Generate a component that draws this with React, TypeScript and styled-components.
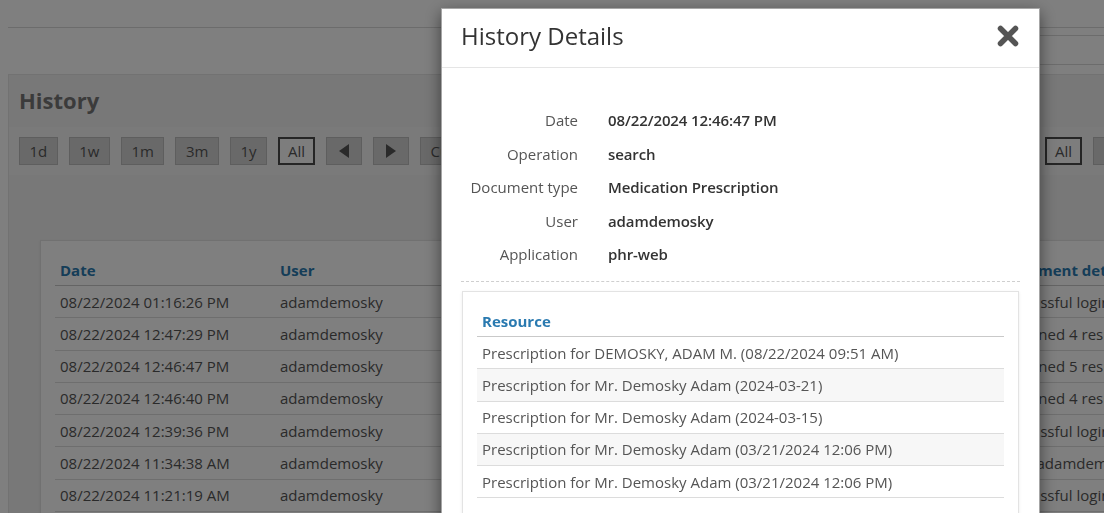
import React from "react";
import styled, { createGlobalStyle } from "styled-components";

const Global = createGlobalStyle`
  html, body { margin: 0; padding: 0; background: #fff; overflow: hidden; }
  body { font-family: "Open Sans", "Noto Sans", Arial, sans-serif; color: #555; }
  * { box-sizing: border-box; }
`;

const Page = styled.div`
  width: 1104px;
  height: 513px;
  overflow: hidden;
  padding-left: 8px;
  background: #fff;
`;

const TopBar = styled.div`
  height: 28px;
  width: 1200px;
  border-bottom: 1px solid #d9d9d9;
`;

const SubBar = styled.div`
  display: flex;
  justify-content: flex-end;
  width: 1200px;
  margin-top: 7px;
`;

const SearchStrip = styled.div`
  width: 300px;
  height: 30px;
  border-top: 1px solid #d9d9d9;
  border-bottom: 1px solid #d9d9d9;
`;

const Panel = styled.section`
  width: 1132px;
  margin-top: 9px;
  background: #f1f1f1;
  border: 1px solid #e4e4e4;
  height: 600px;
`;

const PanelTitle = styled.h2`
  margin: 0;
  padding: 12px 10px 14px;
  font-size: 22px;
  line-height: 26px;
  font-weight: 700;
  color: #777;
`;

const Toolbar = styled.div`
  display: flex;
  align-items: center;
  gap: 11px;
  padding: 10px;
  background: #f5f5f5;
`;

const Group = styled.div<{ $right?: boolean }>`
  display: flex;
  gap: 11px;
  margin-left: ${(p) => (p.$right ? "auto" : "0")};
`;

const RangeButton = styled.button<{ $active?: boolean }>`
  height: 28px;
  padding: 0 ${(p) => (p.$active ? "8px" : "9.5px")};
  display: flex;
  align-items: center;
  justify-content: center;
  font-family: inherit;
  font-size: 15px;
  color: #555;
  background: ${(p) => (p.$active ? "#fafafa" : "#d3d3d3")};
  border: ${(p) => (p.$active ? "2px solid #4a4a4a" : "1px solid #bdbdbd")};
  border-radius: 0;
`;

const ArrowButton = styled(RangeButton)`
  padding: 0 12px;
`;

const Content = styled.div`
  padding: 65px 0 0 31px;
`;

const Card = styled.div<{ $inset?: boolean }>`
  background: #fff;
  border: 1px solid #e3e3e3;
  box-shadow: 0 1px 3px rgba(0, 0, 0, 0.08);
  padding: 14px;
  width: ${(p) => (p.$inset ? "auto" : "1095px")};
  margin: ${(p) => (p.$inset ? "9px 1px 0" : "0")};
  height: ${(p) => (p.$inset ? "260px" : "auto")};
`;

const Table = styled.table`
  width: 100%;
  border-collapse: collapse;
  table-layout: fixed;
  font-size: 15px;
`;

const Th = styled.th<{ $w?: number }>`
  text-align: left;
  font-weight: 700;
  color: #2a7ab0;
  padding: 5px;
  line-height: 20px;
  border-bottom: 1px solid #c9c9c9;
  width: ${(p) => (p.$w ? `${p.$w}px` : "auto")};
  white-space: nowrap;
  overflow: hidden;
`;

const Tr = styled.tr<{ $striped?: boolean }>`
  background: ${(p) => (p.$striped ? "#f7f7f7" : "transparent")};
`;

const Td = styled.td`
  padding: 5.5px 5px;
  line-height: 20.3px;
  color: #555;
  border-bottom: 1px solid #dcdcdc;
  white-space: nowrap;
  overflow: hidden;
`;

const Overlay = styled.div`
  position: fixed;
  inset: 0;
  background: rgba(0, 0, 0, 0.5);
`;

const Modal = styled.div`
  position: fixed;
  left: 441px;
  top: 8px;
  width: 599px;
  height: 560px;
  background: #fff;
  border: 1px solid rgba(0, 0, 0, 0.35);
  box-shadow: 0 5px 15px rgba(0, 0, 0, 0.5);
`;

const ModalHeader = styled.div`
  display: flex;
  align-items: center;
  justify-content: space-between;
  padding: 10px 20px 15px 19px;
  border-bottom: 1px solid #e5e5e5;
`;

const ModalTitle = styled.h4`
  margin: 0;
  font-size: 24px;
  line-height: 33px;
  font-weight: 400;
  color: #333;
`;

const CloseButton = styled.button`
  border: 0;
  background: none;
  padding: 0;
  width: 22px;
  height: 22px;
  display: flex;
`;

const ModalBody = styled.div`
  padding: 42px 19px 0;
`;

const Details = styled.dl`
  margin: 0;
  display: grid;
  grid-template-columns: 117px 1fr;
  column-gap: 30px;
  row-gap: 13.5px;
  font-size: 15px;
  line-height: 20px;
`;

const Dt = styled.dt`
  text-align: right;
  color: #555;
  white-space: nowrap;
`;

const Dd = styled.dd`
  margin: 0;
  font-weight: 600;
  color: #333;
  letter-spacing: -0.1px;
`;

const Divider = styled.div`
  margin-top: 17px;
  border-top: 1px dashed #cfcfcf;
`;

const Triangle = ({ dir }: { dir: "left" | "right" }) => (
  <svg width="10" height="14" viewBox="0 0 10 14">
    <path d={dir === "left" ? "M10 0 L0 7 L10 14 Z" : "M0 0 L10 7 L0 14 Z"} fill="#555" />
  </svg>
);

const CloseIcon = () => (
  <svg width="22" height="22" viewBox="0 0 22 22">
    <path d="M3.5 3.5 L18.5 18.5 M18.5 3.5 L3.5 18.5" stroke="#555" strokeWidth="5.5" strokeLinecap="round" />
  </svg>
);

const historyRows = [
  ["08/22/2024 01:16:26 PM", "phr-web", "login", "", "Successful login"],
  ["08/22/2024 12:47:29 PM", "phr-web", "search", "Medication Prescription", "Returned 4 results"],
  ["08/22/2024 12:46:47 PM", "phr-web", "search", "Medication Prescription", "Returned 5 results"],
  ["08/22/2024 12:46:40 PM", "phr-web", "search", "Medication Prescription", "Returned 4 results"],
  ["08/22/2024 12:39:36 PM", "phr-web", "login", "", "Successful login"],
  ["08/22/2024 11:34:38 AM", "phr-web", "logout", "", "User adamdemosky logged out"],
  ["08/22/2024 11:21:19 AM", "phr-web", "login", "", "Successful login"],
];

const resources = [
  "Prescription for DEMOSKY, ADAM M. (08/22/2024 09:51 AM)",
  "Prescription for Mr. Demosky Adam (2024-03-21)",
  "Prescription for Mr. Demosky Adam (2024-03-15)",
  "Prescription for Mr. Demosky Adam (03/21/2024 12:06 PM)",
  "Prescription for Mr. Demosky Adam (03/21/2024 12:06 PM)",
];

const details: [string, string][] = [
  ["Date", "08/22/2024 12:46:47 PM"],
  ["Operation", "search"],
  ["Document type", "Medication Prescription"],
  ["User", "adamdemosky"],
  ["Application", "phr-web"],
];

export default function App() {
  return (
    <>
      <Global />
      <Page>
        <TopBar />
        <SubBar>
          <SearchStrip />
        </SubBar>
        <Panel>
          <PanelTitle>History</PanelTitle>
          <Toolbar>
            <Group>
              {["1d", "1w", "1m", "3m", "1y"].map((r) => (
                <RangeButton key={r}>{r}</RangeButton>
              ))}
              <RangeButton $active>All</RangeButton>
              <ArrowButton>
                <Triangle dir="left" />
              </ArrowButton>
              <ArrowButton>
                <Triangle dir="right" />
              </ArrowButton>
              <RangeButton>Custom</RangeButton>
            </Group>
            <Group $right>
              <RangeButton $active>All</RangeButton>
              <ArrowButton>
                <Triangle dir="left" />
              </ArrowButton>
            </Group>
          </Toolbar>
          <Content>
            <Card>
              <Table>
                <thead>
                  <tr>
                    <Th $w={220}>Date</Th>
                    <Th $w={180}>User</Th>
                    <Th $w={150}>Application</Th>
                    <Th $w={130}>Operation</Th>
                    <Th $w={260}>Document type</Th>
                    <Th>Document details</Th>
                  </tr>
                </thead>
                <tbody>
                  {historyRows.map((r, i) => (
                    <tr key={i}>
                      <Td>{r[0]}</Td>
                      <Td>adamdemosky</Td>
                      <Td>{r[1]}</Td>
                      <Td>{r[2]}</Td>
                      <Td>{r[3]}</Td>
                      <Td>{r[4]}</Td>
                    </tr>
                  ))}
                </tbody>
              </Table>
            </Card>
          </Content>
        </Panel>
      </Page>
      <Overlay />
      <Modal role="dialog">
        <ModalHeader>
          <ModalTitle>History Details</ModalTitle>
          <CloseButton aria-label="Close">
            <CloseIcon />
          </CloseButton>
        </ModalHeader>
        <ModalBody>
          <Details>
            {details.map(([k, v]) => (
              <React.Fragment key={k}>
                <Dt>{k}</Dt>
                <Dd>{v}</Dd>
              </React.Fragment>
            ))}
          </Details>
          <Divider />
          <Card $inset>
            <Table>
              <thead>
                <tr>
                  <Th>Resource</Th>
                </tr>
              </thead>
              <tbody>
                {resources.map((r, i) => (
                  <Tr key={i} $striped={i % 2 === 1}>
                    <Td>{r}</Td>
                  </Tr>
                ))}
              </tbody>
            </Table>
          </Card>
        </ModalBody>
      </Modal>
    </>
  );
}
